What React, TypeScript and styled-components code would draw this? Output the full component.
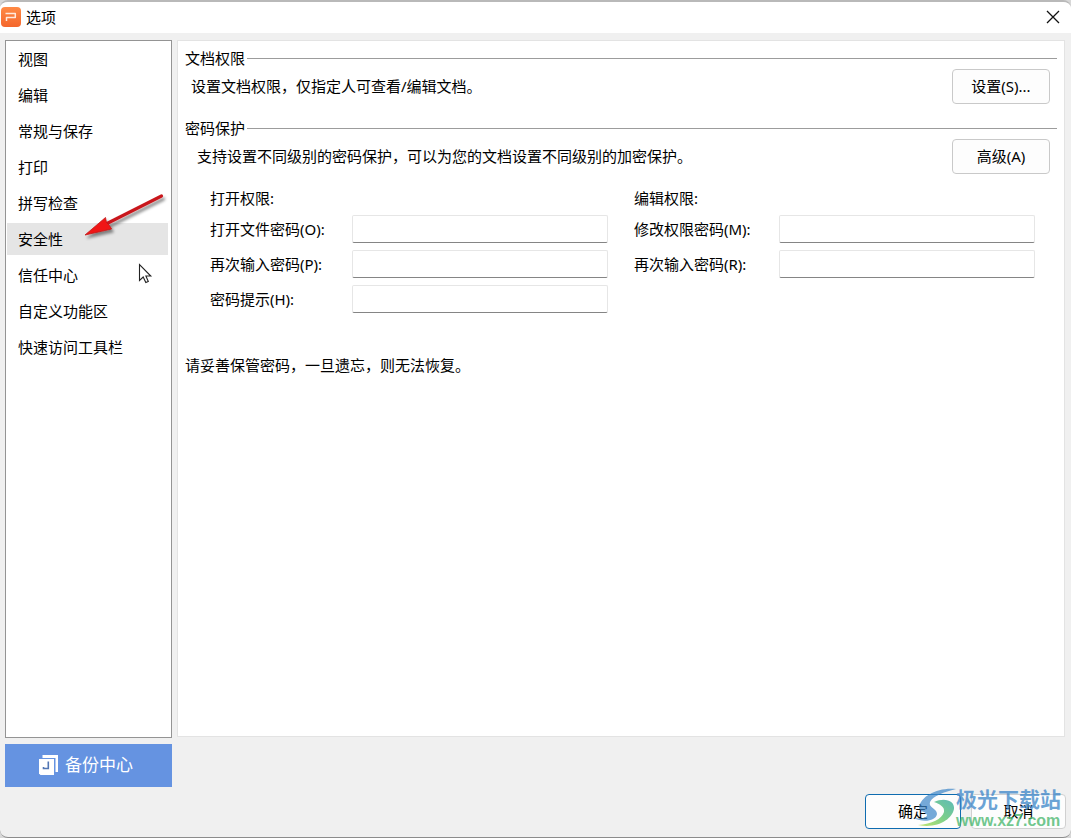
import React, { useState } from 'react';
import styled, { createGlobalStyle, css } from 'styled-components';

const GlobalStyle = createGlobalStyle`
  * { box-sizing: border-box; }
  body {
    margin: 0;
    background: #d8d8d8;
    color: #000;
    font-family: "Noto Sans", "Noto Sans CJK SC", sans-serif;
    font-size: 15px;
    line-height: 20px;
  }
  button, input { font: inherit; color: inherit; }
`;

const Dialog = styled.div`
  position: relative;
  display: flex;
  flex-direction: column;
  min-height: 100vh;
  background: #f0f0f0;
  border-top: 2px solid #b9b9b9;
  border-bottom: 1px solid #8c8c8c;
  border-radius: 8px;
  overflow: hidden;
`;

const TitleBar = styled.header`
  display: flex;
  align-items: center;
  gap: 5px;
  height: 31px;
  padding: 0 11px 2px 1px;
  background: #fff;
`;

const Title = styled.h1`
  flex: 1;
  margin: 0;
  font-size: 15px;
  font-weight: 400;
`;

const CloseButton = styled.button`
  display: flex;
  padding: 0;
  border: 0;
  background: none;
`;

const Body = styled.div`
  display: flex;
  flex: 1;
  gap: 5px;
  padding: 7px 6px 0 5px;
`;

const Side = styled.aside`
  display: flex;
  flex-direction: column;
  flex: none;
  gap: 6px;
  width: 167px;
`;

const Nav = styled.nav`
  display: flex;
  flex: 1;
  flex-direction: column;
  gap: 4px;
  padding: 2px 3px 2px 1px;
  background: #fff;
  border: 1px solid #949494;
`;

const NavItem = styled.button<{ $active: boolean }>`
  height: 32px;
  padding: 0 11px;
  border: 0;
  background: ${(p) => (p.$active ? '#e5e5e5' : 'transparent')};
  text-align: left;
`;

const BackupButton = styled.button`
  display: flex;
  align-items: center;
  justify-content: center;
  gap: 6px;
  height: 43px;
  padding: 0 5px 2px 0;
  border: 0;
  background: #6593e1;
  color: #fff;
  font-size: 17px;
`;

const Panel = styled.main`
  flex: 1;
  margin-bottom: 50px;
  padding: 7px;
  background: #fff;
  border: 1px solid #e3e3e3;
`;

const Heading = styled.h2`
  display: flex;
  align-items: center;
  gap: 2px;
  margin: 0;
  font-size: 15px;
  font-weight: 400;

  &::after {
    content: '';
    flex: 1;
    height: 1px;
    background: #9c9c9c;
  }
`;

const SettingRow = styled.div<{ $indent: number }>`
  display: flex;
  align-items: center;
  justify-content: space-between;
  height: 36px;
  margin-bottom: 14px;
  padding: 0 7px 0 ${(p) => p.$indent}px;
`;

const Text = styled.p`
  margin: 0;
`;

const buttonBase = css`
  height: 35px;
  padding: 0 0 2px;
  background: #fdfdfd;
  border: 1px solid #c9c9c9;
  border-radius: 4px;
`;

const SettingButton = styled.button`
  ${buttonBase}
  align-self: flex-end;
  width: 98px;
`;

const Groups = styled.div`
  display: grid;
  grid-template-columns: 398fr 401fr;
  align-items: start;
  gap: 26px;
  padding: 0 22px 0 25px;
`;

const Group = styled.div`
  display: flex;
  flex-direction: column;
  gap: 7px;
`;

const Field = styled.div<{ $label: number }>`
  display: grid;
  grid-template-columns: ${(p) => p.$label}px 1fr;
  align-items: center;
`;

const TextBox = styled.input`
  width: 100%;
  height: 28px;
  padding: 0 6px;
  background: #fff;
  border: 1px solid #e6e6e6;
  border-bottom-color: #858585;
  border-radius: 2px;
  outline: 0;
`;

const Notice = styled(Text)`
  margin-top: 42px;
`;

const Footer = styled.footer`
  display: flex;
  justify-content: flex-end;
  gap: 10px;
  padding: 7px 5px 8px;
`;

const FooterButton = styled.button<{ $primary?: boolean }>`
  ${buttonBase}
  width: ${(p) => (p.$primary ? 96 : 95)}px;
  border-color: ${(p) => (p.$primary ? '#0f6cb0' : '#d0d0d0')};
`;

const Arrow = styled.svg`
  position: absolute;
  left: 80px;
  top: 184px;
  pointer-events: none;
`;

const Pointer = styled.svg`
  position: absolute;
  left: 138px;
  top: 261px;
  pointer-events: none;
`;

const Watermark = styled.div`
  position: absolute;
  right: 9px;
  bottom: 6px;
  display: flex;
  align-items: center;
  pointer-events: none;
`;

const WatermarkText = styled.div`
  display: flex;
  flex-direction: column;
  width: 106px;
  margin-left: -3px;
  white-space: nowrap;
`;

const WatermarkName = styled.span`
  color: rgba(59, 133, 200, 0.75);
  font-size: 21px;
  font-weight: 700;
  line-height: 24px;
`;

const WatermarkSite = styled.span`
  color: rgba(76, 184, 112, 0.8);
  font-family: "Liberation Sans", sans-serif;
  font-size: 16px;
  font-weight: 700;
  line-height: 20px;
`;

const LogoIcon = () => (
  <svg width="20" height="20" viewBox="0 0 20 20" aria-hidden="true">
    <defs>
      <linearGradient id="logo" x1="0" y1="0" x2="0" y2="1">
        <stop offset="0" stopColor="#ff8a45" />
        <stop offset="1" stopColor="#f4662c" />
      </linearGradient>
    </defs>
    <rect width="20" height="20" rx="4" fill="url(#logo)" />
    <path d="M5.500 14V10.500H14.300V6.500H4.500" fill="none" stroke="#ffe9dc" strokeWidth="1.500" strokeLinejoin="round" />
  </svg>
);

const CloseIcon = () => (
  <svg width="14" height="14" viewBox="0 0 14 14" aria-hidden="true">
    <path d="M1 1L13 13M13 1L1 13" stroke="#111" strokeWidth="1.3" />
  </svg>
);

const BackupIcon = () => (
  <svg width="20" height="20" viewBox="0 0 20 20" aria-hidden="true">
    <path d="M3.500 0H19V17H16.500V3H3.500Z" fill="#fff" />
    <path d="M0 4H15V20H1.500L0 18.500Z" fill="#fff" />
    <path d="M9.300 6.500V13.500H4.500V12" fill="none" stroke="#5276b4" strokeWidth="1.600" />
  </svg>
);

const navItems = [
  '视图', '编辑', '常规与保存', '打印', '拼写检查',
  '安全性', '信任中心', '自定义功能区', '快速访问工具栏',
];

const fieldGroups = [
  {
    caption: '打开权限:',
    label: 142,
    fields: [
      { id: 'open', text: '打开文件密码(O):', type: 'password' },
      { id: 'openAgain', text: '再次输入密码(P):', type: 'password' },
      { id: 'hint', text: '密码提示(H):', type: 'text' },
    ],
  },
  {
    caption: '编辑权限:',
    label: 145,
    fields: [
      { id: 'edit', text: '修改权限密码(M):', type: 'password' },
      { id: 'editAgain', text: '再次输入密码(R):', type: 'password' },
    ],
  },
];

export default function App() {
  const [active, setActive] = useState('安全性');

  return (
    <>
      <GlobalStyle />
      <Dialog>
        <TitleBar>
          <LogoIcon />
          <Title>选项</Title>
          <CloseButton type="button" aria-label="关闭"><CloseIcon /></CloseButton>
        </TitleBar>

        <Body>
          <Side>
            <Nav>
              {navItems.map((item) => (
                <NavItem key={item} type="button" $active={item === active} onClick={() => setActive(item)}>
                  {item}
                </NavItem>
              ))}
            </Nav>
            <BackupButton type="button"><BackupIcon />备份中心</BackupButton>
          </Side>

          <Panel>
            <Heading>文档权限</Heading>
            <SettingRow $indent={6}>
              <Text>设置文档权限，仅指定人可查看/编辑文档。</Text>
              <SettingButton type="button">设置(S)...</SettingButton>
            </SettingRow>

            <Heading>密码保护</Heading>
            <SettingRow $indent={12}>
              <Text>支持设置不同级别的密码保护，可以为您的文档设置不同级别的加密保护。</Text>
              <SettingButton type="button">高级(A)</SettingButton>
            </SettingRow>

            <Groups>
              {fieldGroups.map((group) => (
                <Group key={group.caption} role="group" aria-label={group.caption}>
                  <Text>{group.caption}</Text>
                  {group.fields.map((field) => (
                    <Field key={field.id} $label={group.label}>
                      <label htmlFor={field.id}>{field.text}</label>
                      <TextBox id={field.id} type={field.type} />
                    </Field>
                  ))}
                </Group>
              ))}
            </Groups>

            <Notice>请妥善保管密码，一旦遗忘，则无法恢复。</Notice>
          </Panel>
        </Body>

        <Footer>
          <FooterButton type="button" $primary>确定</FooterButton>
          <FooterButton type="button">取消</FooterButton>
        </Footer>

        <Arrow width="90" height="64" viewBox="0 0 90 64" aria-hidden="true">
          <defs>
            <filter id="shadow" x="-20%" y="-20%" width="150%" height="160%">
              <feDropShadow dx="2" dy="3" stdDeviation="1.5" floodColor="#000" floodOpacity="0.45" />
            </filter>
          </defs>
          <g filter="url(#shadow)">
            <path d="M81.500 10L27 37.500" stroke="#c9191c" strokeWidth="3.200" strokeLinecap="round" />
            <path d="M5 49L25.500 31.500L26.500 36.500L29.500 39.500L31.500 43Z" fill="#f01212" stroke="#c01818" strokeWidth="0.800" strokeLinejoin="round" />
          </g>
        </Arrow>

        <Pointer width="16" height="22" viewBox="0 0 16 22" aria-hidden="true">
          <path d="M1.500 1.500V17.500L5.200 14L7.800 19.600L10.300 18.500L7.900 13H12.800Z" fill="#fff" stroke="#222" strokeWidth="1.100" />
        </Pointer>

        <Watermark>
          <svg width="46" height="44" viewBox="0 0 46 44" aria-hidden="true">
            <defs>
              <linearGradient id="swirl" x1="1" y1="0" x2="0" y2="1">
                <stop offset="0" stopColor="#35aaa5" />
                <stop offset="0.5" stopColor="#5cc46c" />
                <stop offset="1" stopColor="#b4e04e" />
              </linearGradient>
            </defs>
            <path d="M43 2C25 0 8 9 6 20C6 25 13 24 14 28C14 31 8 32 1 31C10 36 23 34 24 27C24 21 15 21 17 15C20 9 31 5 43 2Z" fill="#3b85c8" opacity="0.7" />
            <path d="M21 15C32 10 42 14 41 22C39 32 25 42 5 38C19 37 29 32 31 25C32 20 27 17 21 15Z" fill="url(#swirl)" opacity="0.8" />
          </svg>
          <WatermarkText>
            <WatermarkName>极光下载站</WatermarkName>
            <WatermarkSite>www.xz7.com</WatermarkSite>
          </WatermarkText>
        </Watermark>
      </Dialog>
    </>
  );
}
